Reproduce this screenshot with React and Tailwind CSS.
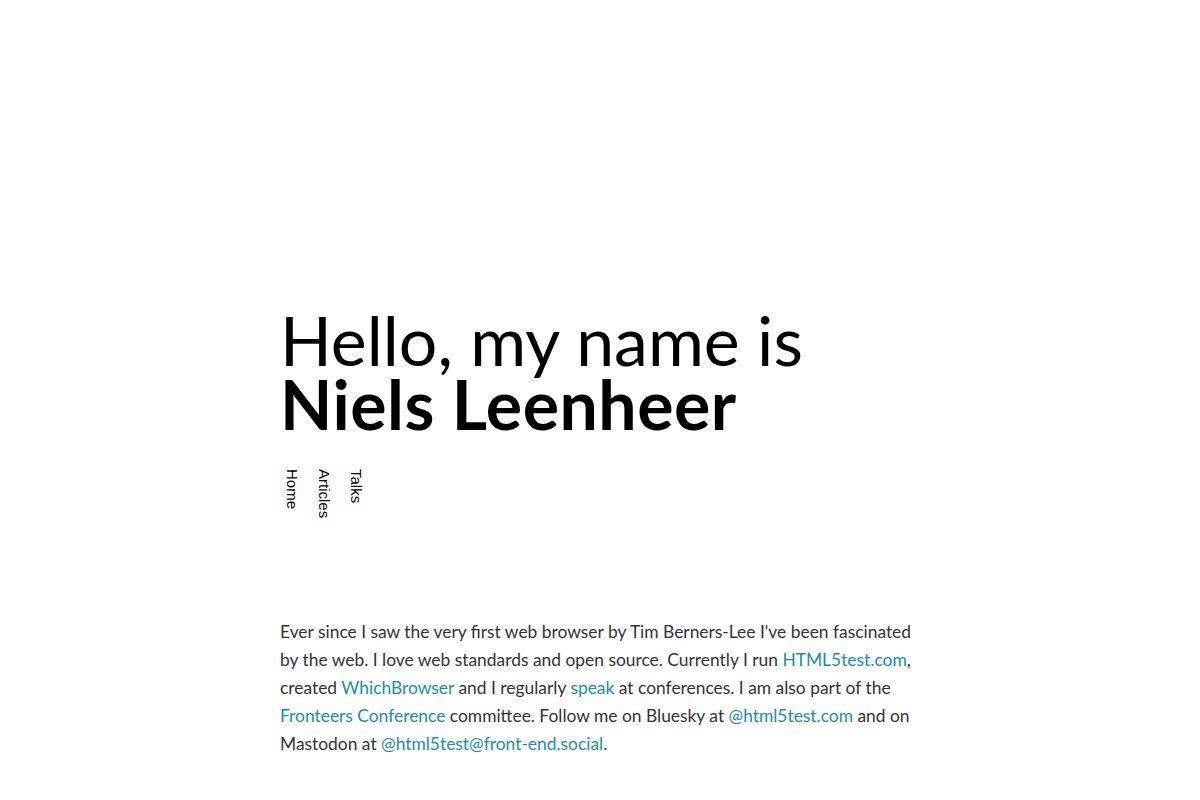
import React from "react";

const link = "text-[#1a8fa3] hover:underline";

export default function App() {
  return (
    <div className="min-h-screen bg-white font-['Lato',sans-serif]">
      <main className="mx-auto w-[640px] pt-[308px] pb-10">
        <h1 className="text-[68px] leading-[64px] text-black">
          <span className="block font-normal">Hello, my name is</span>
          <span className="block font-bold tracking-[0.5px]">Niels Leenheer</span>
        </h1>
        <nav className="mt-[33px] flex gap-[8px] font-['Liberation_Sans',sans-serif] text-[15px] text-black">
          <a href="#" className="[writing-mode:vertical-rl] leading-[24px]">Home</a>
          <a href="#" className="[writing-mode:vertical-rl] leading-[24px]">Articles</a>
          <a href="#" className="[writing-mode:vertical-rl] leading-[24px]">Talks</a>
        </nav>
        <p className="mt-[100px] text-[17.4px] leading-[28px] text-[#333]">
          Ever since I saw the very first web browser by Tim Berners-Lee I've been fascinated by the web. I love web
          standards and open source. Currently I run <a href="#" className={link}>HTML5test.com</a>, created{" "}
          <a href="#" className={link}>WhichBrowser</a> and I regularly <a href="#" className={link}>speak</a> at
          conferences. I am also part of the <a href="#" className={link}>Fronteers Conference</a> committee. Follow me
          on Bluesky at <a href="#" className={link}>@html5test.com</a> and on Mastodon at{" "}
          <a href="#" className={link}>@html5test@front-end.social</a>.
        </p>
      </main>
    </div>
  );
}
